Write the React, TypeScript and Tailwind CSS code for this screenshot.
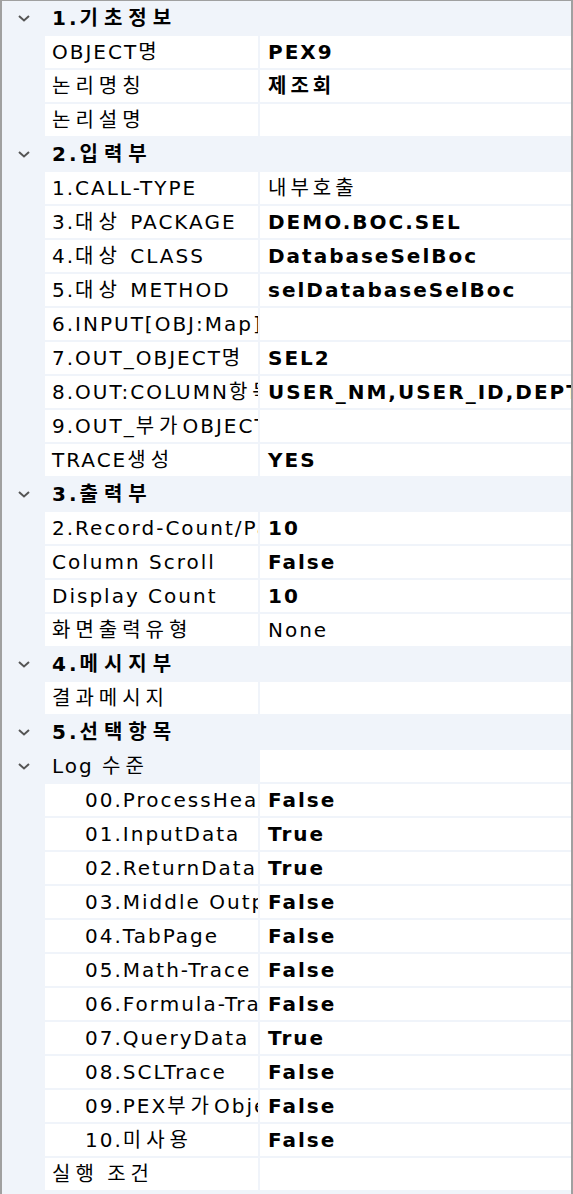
import { Fragment } from "react";

type Row =
  | { kind: "cat"; label: string }
  | { kind: "sub"; label: string }
  | { kind: "prop"; label: string; value?: string; bold?: boolean; child?: boolean };

const rows: Row[] = [
  { kind: "cat", label: "1.기초정보" },
  { kind: "prop", label: "OBJECT명", value: "PEX9", bold: true },
  { kind: "prop", label: "논리명칭", value: "제조회", bold: true },
  { kind: "prop", label: "논리설명" },
  { kind: "cat", label: "2.입력부" },
  { kind: "prop", label: "1.CALL-TYPE", value: "내부호출" },
  { kind: "prop", label: "3.대상 PACKAGE", value: "DEMO.BOC.SEL", bold: true },
  { kind: "prop", label: "4.대상 CLASS", value: "DatabaseSelBoc", bold: true },
  { kind: "prop", label: "5.대상 METHOD", value: "selDatabaseSelBoc", bold: true },
  { kind: "prop", label: "6.INPUT[OBJ:Map]" },
  { kind: "prop", label: "7.OUT_OBJECT명", value: "SEL2", bold: true },
  { kind: "prop", label: "8.OUT:COLUMN항목", value: "USER_NM,USER_ID,DEPT_CD", bold: true },
  { kind: "prop", label: "9.OUT_부가OBJECT" },
  { kind: "prop", label: "TRACE생성", value: "YES", bold: true },
  { kind: "cat", label: "3.출력부" },
  { kind: "prop", label: "2.Record-Count/Page", value: "10", bold: true },
  { kind: "prop", label: "Column Scroll", value: "False", bold: true },
  { kind: "prop", label: "Display Count", value: "10", bold: true },
  { kind: "prop", label: "화면출력유형", value: "None" },
  { kind: "cat", label: "4.메시지부" },
  { kind: "prop", label: "결과메시지" },
  { kind: "cat", label: "5.선택항목" },
  { kind: "sub", label: "Log 수준" },
  { kind: "prop", label: "00.ProcessHeader", value: "False", bold: true, child: true },
  { kind: "prop", label: "01.InputData", value: "True", bold: true, child: true },
  { kind: "prop", label: "02.ReturnData", value: "True", bold: true, child: true },
  { kind: "prop", label: "03.Middle Output", value: "False", bold: true, child: true },
  { kind: "prop", label: "04.TabPage", value: "False", bold: true, child: true },
  { kind: "prop", label: "05.Math-Trace", value: "False", bold: true, child: true },
  { kind: "prop", label: "06.Formula-Trace", value: "False", bold: true, child: true },
  { kind: "prop", label: "07.QueryData", value: "True", bold: true, child: true },
  { kind: "prop", label: "08.SCLTrace", value: "False", bold: true, child: true },
  { kind: "prop", label: "09.PEX부가Object", value: "False", bold: true, child: true },
  { kind: "prop", label: "10.미사용", value: "False", bold: true, child: true },
  { kind: "prop", label: "실행 조건" },
];

// the grid's bitmap font is wider than ours, hangul most of all
function Txt({ text, wide }: { text: string; wide: "name" | "head" | "value" }) {
  const parts = text.match(/[\uac00-\ud7a3]+|[^\uac00-\ud7a3]+/g) ?? [];
  return (
    <span className="whitespace-pre">
      {parts.map((p, i) => {
        const ko = /[\uac00-\ud7a3]/.test(p);
        let cls = "";
        if (wide === "name") cls = ko ? "tracking-[5px]" : "tracking-[2px]";
        if (wide === "head") cls = ko ? "tracking-[6px]" : "tracking-[3px]";
        if (wide === "value") cls = ko ? "tracking-[4px]" : "tracking-[2px]";
        return (
          <span key={i} className={cls}>
            {p}
          </span>
        );
      })}
    </span>
  );
}

function Chevron() {
  return (
    <svg width="14" height="10" viewBox="0 0 14 10" className="text-[#555]">
      <polyline points="2,3 7,7.5 12,3" fill="none" stroke="currentColor" strokeWidth="2" />
    </svg>
  );
}

export default function App() {
  return (
    <div
      className="w-[573px] h-[1194px] overflow-hidden border-t border-x-2 border-[#a0a0a0] bg-[#f0f4fa] pt-px text-[20px] text-black"
      style={{ fontFamily: '"DejaVu Sans", "Noto Sans CJK KR", sans-serif' }}
    >
      {rows.map((r, i) => (
        <Fragment key={i}>
          {r.kind === "cat" && (
            <div className="h-[32px] mb-[2px] flex items-center">
              <div className="w-[43px] shrink-0 flex justify-center">
                <Chevron />
              </div>
              <span className="pl-[7px] font-bold whitespace-nowrap">
                <Txt text={r.label} wide="head" />
              </span>
            </div>
          )}
          {r.kind === "sub" && (
            <div className="h-[32px] mb-[2px] flex">
              <div className="w-[43px] shrink-0 flex items-center justify-center">
                <Chevron />
              </div>
              <div className="w-[213px] shrink-0 flex items-center pl-[7px] whitespace-nowrap overflow-hidden">
                <Txt text={r.label} wide="name" />
              </div>
              <div className="ml-[2px] flex-1 bg-white" />
            </div>
          )}
          {r.kind === "prop" && (
            <div className="h-[32px] mb-[2px] flex">
              <div className="w-[43px] shrink-0" />
              <div
                className={
                  r.child
                    ? "w-[213px] shrink-0 bg-white flex items-center pl-[40px] whitespace-nowrap overflow-hidden"
                    : "w-[213px] shrink-0 bg-white flex items-center pl-[7px] whitespace-nowrap overflow-hidden"
                }
              >
                <Txt text={r.label} wide="name" />
              </div>
              <div
                className={
                  r.bold
                    ? "ml-[2px] flex-1 bg-white flex items-center pl-[8px] font-bold whitespace-nowrap overflow-hidden"
                    : "ml-[2px] flex-1 bg-white flex items-center pl-[8px] whitespace-nowrap overflow-hidden"
                }
              >
                {r.value && <Txt text={r.value} wide="value" />}
              </div>
            </div>
          )}
        </Fragment>
      ))}
    </div>
  );
}
